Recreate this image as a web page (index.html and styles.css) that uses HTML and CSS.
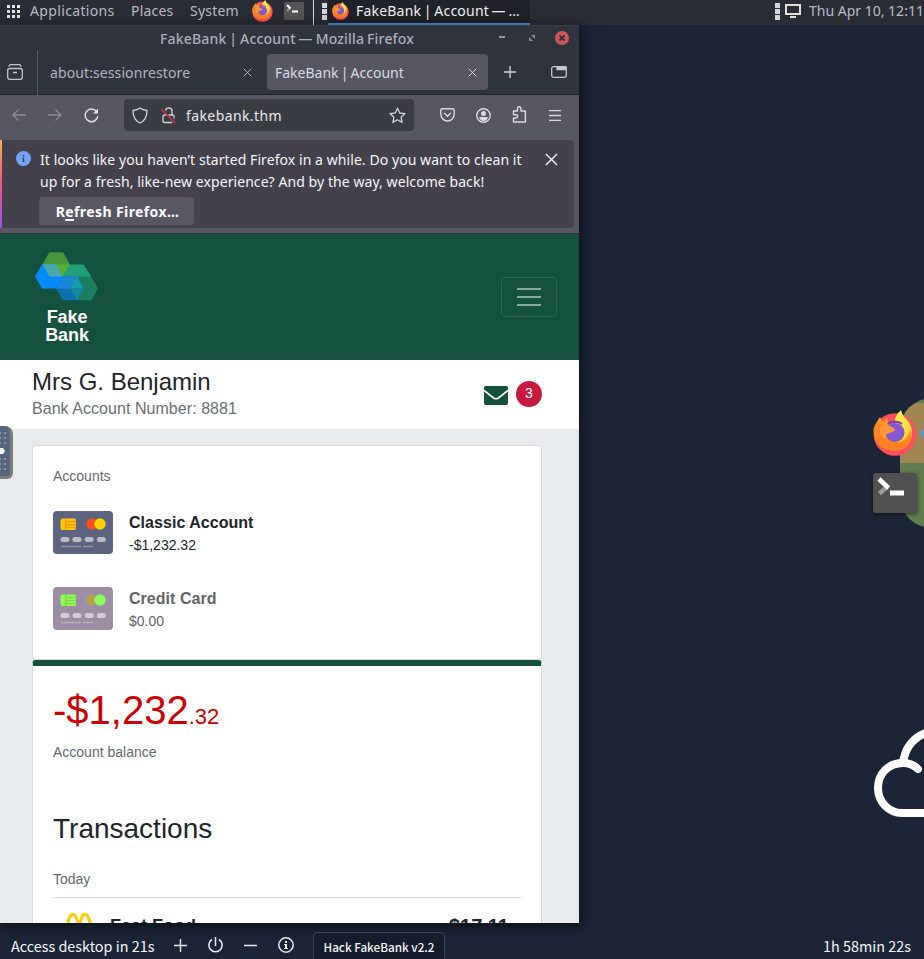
FILE: index.html
```html
<!DOCTYPE html>
<html lang="en">
<head>
<meta charset="utf-8">
<title>Desktop</title>
<link rel="stylesheet" href="styles.css">
</head>
<body>
<svg width="0" height="0" class="defs">
  <defs>
    <linearGradient id="fxo" x1="0.8" y1="0" x2="0.3" y2="1"><stop offset="0" stop-color="#ffbd35"/><stop offset=".45" stop-color="#ff8a1c"/><stop offset="1" stop-color="#ff7a22"/></linearGradient>
    <linearGradient id="fxy" x1="0" y1="0" x2="0" y2="1"><stop offset="0" stop-color="#fff04d"/><stop offset="1" stop-color="#ffc62f"/></linearGradient>
    <symbol id="fox" viewBox="0 0 44 46">
      <circle cx="22" cy="24.500" r="21.300" fill="#ff4f5e"/>
      <path d="M28 0c1 5 4 8 7 11 5 6 5 15 1 22-5 6-12 6-16 2l2-26c1-4 3-6 6-9z" fill="url(#fxy)"/>
      <path d="M.5 21C.5 16 4 12 7 7c1 2 2 4 3 5l4-5 1 6c4 0 8 1 10 3l-4 7-2 6c5 7 16 2 18-10 5 12-3 22-16 22S.5 32 .5 21z" fill="url(#fxo)"/>
      <circle cx="22" cy="22.500" r="9.500" fill="#8359cf"/>
      <path d="M7 17c6-3 11-1 15 2 0 3-3 3-6 4-3 1-4 4-3 7-5-3-7-8-6-13z" fill="#ff9640"/>
      <path d="M15 14c4-3 10-3 14 0" fill="none" stroke="#703db5" stroke-width="2"/>
    </symbol>
    <symbol id="term" viewBox="0 0 44 40">
      <rect width="44" height="40" rx="3" fill="#505050"/>
      <path d="M6.500 20.500l8-7" stroke="#999" stroke-width="4.500"/>
      <path d="M6 6l9.500 9" stroke="#fff" stroke-width="4.500"/>
      <path d="M17 20h14" stroke="#fff" stroke-width="5"/>
    </symbol>
    <symbol id="x" viewBox="0 0 14 14"><path d="M1 1l12 12M13 1L1 13" fill="none" stroke="currentColor" stroke-width="1.500"/></symbol>
  </defs>
</svg>
<div class="desktop">
  <header class="panel ui">
    <svg class="grid-icon" width="13" height="13" fill="#e4e5e8"><path d="M0 0h3v3H0zM5 0h3v3H5zM10 0h3v3h-3zM0 5h3v3H0zM5 5h3v3H5zM10 5h3v3h-3zM0 10h3v3H0zM5 10h3v3H5zM10 10h3v3h-3z"/></svg>
    <span class="menu m1">Applications</span><span class="menu m2">Places</span><span class="menu m3">System</span>
    <svg class="launch-fox" width="21" height="22"><use href="#fox"/></svg>
    <svg class="launch-term" width="20" height="18" viewBox="0 0 20 18"><rect width="20" height="18" rx="1" fill="#555"/><path d="M3 9l3-3" stroke="#999" stroke-width="1.800"/><path d="M3 3l3.500 3.500M8 9.500h6" stroke="#fff" stroke-width="2"/></svg>
    <i class="sep"></i>
    <svg class="grip" width="5" height="17" fill="#d5d6d9"><path d="M0 0h5v5H0zM0 6h5v5H0zM0 12h5v5H0z"/></svg>
    <div class="task"><svg width="17" height="18"><use href="#fox"/></svg><span>FakeBank | Account — …</span></div>
    <svg class="grip grip-right" width="5" height="17" fill="#d5d6d9"><path d="M0 0h5v5H0zM0 6h5v5H0zM0 12h5v5H0z"/></svg>
    <svg class="monitor" width="16" height="14"><path d="M1 1h14v9H1z" fill="none" stroke="#e0e0dc" stroke-width="2"/><path d="M5 12h6v2H5z" fill="#e0e0dc"/></svg>
    <span class="clock">Thu Apr 10, 12:11</span>
  </header>

  <main class="window">
    <div class="titlebar ui">
      <span class="win-title">FakeBank | Account — Mozilla Firefox</span>
      <svg width="70" height="16" viewBox="0 0 70 16"><path d="M0 7h6" stroke="#9196a3" stroke-width="2"/><path d="M32 5h4v4zM30 7v4h4z" fill="#858a96"/><circle cx="63" cy="8" r="7" fill="#d2555b"/><path d="M60.500 5.500l5 5M65.500 5.500l-5 5" stroke="#30343f" stroke-width="1.800"/></svg>
    </div>
    <div class="tabs ui">
      <div class="recent"><svg width="16" height="16" fill="none" stroke="#c4c7d1" stroke-width="1.300"><rect x=".7" y="4.500" width="14.600" height="10.800" rx="2"/><path d="M2 2.700C2 1.500 3 .700 4 .7h8c1 0 2 .8 2 2M6 8.500h4"/></svg></div>
      <div class="tab"><span class="t1">about:sessionrestore</span><svg width="9" height="9"><use href="#x"/></svg></div>
      <div class="tab active"><span class="t2">FakeBank | Account</span><svg width="9" height="9"><use href="#x"/></svg></div>
      <svg class="plus" width="12" height="12" stroke="#d0d3dc" stroke-width="1.300"><path d="M0 6h12M6 0v12"/></svg>
      <svg class="tablist" width="16" height="12" fill="none" stroke="#c4c7d1" stroke-width="1.300"><rect x=".7" y=".7" width="14.600" height="10.600" rx="2"/><path d="M6 1v2.500h9V1z" fill="#c4c7d1"/></svg>
    </div>
    <div class="nav ui">
      <svg class="back" width="14" height="12" fill="none" stroke="#8b8c97" stroke-width="1.300"><path d="M14 6H1M6.500.5L1 6l5.500 5.500"/></svg>
      <svg class="fwd" width="14" height="12" fill="none" stroke="#8b8c97" stroke-width="1.300"><path d="M0 6h13M7.500.5L13 6l-5.500 5.500"/></svg>
      <svg class="reload" width="15" height="15" fill="none" stroke="#e0e1e6" stroke-width="1.500"><path d="M12.500 3.500A6.300 6.300 0 1 0 13.800 8"/><path d="M14 .5v5H9z" fill="#e0e1e6" stroke="none"/></svg>
      <div class="url">
        <svg width="16" height="17" fill="none" stroke="#d0d2d9" stroke-width="1.300"><path d="M8 1C6 2.500 3.500 3.200 1 3.500 1 9 2.500 13.500 8 16c5.500-2.500 7-7 7-12.500C12.500 3.200 10 2.500 8 1z"/></svg>
        <svg class="lock" width="15" height="17" fill="none" stroke="#d0d2d9" stroke-width="1.300"><path d="M4.500 3.500a3.300 3.300 0 0 1 6.500 1V8M7.500 8h4c1 0 1.500.5 1.500 1.500v2M11 15.500H3.500c-1 0-1.500-.5-1.500-1.500V9.500C2 8.500 2.500 8 3.500 8h1V6"/><path d="M0 2l14 14" stroke="#e22850" stroke-width="1.500"/></svg>
        <span>fakebank.thm</span>
        <svg class="star" width="17" height="17" fill="none" stroke="#d0d2d9" stroke-width="1.300" stroke-linejoin="round"><path d="M8.500 1.200l2.200 4.800 5.300.6-3.900 3.600 1 5.200-4.600-2.600-4.600 2.600 1-5.200L1 6.600 6.300 6z"/></svg>
      </div>
      <svg class="pocket" width="15" height="14" fill="none" stroke="#d8dae0" stroke-width="1.400"><path d="M2.500.8h10c1 0 1.700.7 1.700 1.700V6c0 4-3 7-6.700 7S.8 10 .8 6V2.500C.8 1.500 1.500.8 2.500.800zM4.200 5l3.300 3.200L10.800 5"/></svg>
      <svg class="acct" width="15" height="15"><circle cx="7.500" cy="7.500" r="6.700" fill="none" stroke="#d8dae0" stroke-width="1.400"/><circle cx="7.500" cy="5.600" r="2.500" fill="#d8dae0"/><path d="M3 9h9c-.5 2.500-2 4-4.500 4S3.500 11.500 3 9z" fill="#d8dae0"/></svg>
      <svg class="ext" width="15" height="17" fill="none" stroke="#d8dae0" stroke-width="1.400" stroke-linejoin="round"><path d="M1.500 5h4V2.500a1.700 1.700 0 0 1 3.400 0V5h4.500v11H1.500v-4H4a1.600 1.600 0 0 0 0-3.300H1.500z"/></svg>
      <svg class="burger" width="12" height="11" stroke="#d8dae0" stroke-width="1.300"><path d="M0 .7h12M0 5.500h12M0 10.300h12"/></svg>
    </div>
    <div class="notice-wrap ui">
      <div class="notice">
        <svg class="info" width="15" height="15"><circle cx="7.500" cy="7.500" r="7.500" fill="#72a6f5"/><path d="M6.700 6.500h1.500V11H6.700zM6.700 4h1.500v1.500H6.700z" fill="#34446a"/></svg>
        <div class="notice-body">
          <div class="l1">It looks like you haven’t started Firefox in a while. Do you want to clean it</div>
          <div class="l2">up for a fresh, like-new experience? And by the way, welcome back!</div>
          <button class="ui">R<u>e</u>fresh Firefox…</button>
        </div>
        <svg class="close" width="13" height="13"><use href="#x"/></svg>
      </div>
    </div>
    <section class="page">
      <div class="brandbar">
        <div class="brand">
          <svg width="63" height="49" viewBox="106 66 190 146">
            <path d="M149 66h42l20 37-22 36h-40l-20-37z" fill="#46973a"/>
            <path d="M127 102h43l20 37-20 36h-43l-21-36z" fill="#008cff"/>
            <path d="M211 103h42l22 36-21 36h-43l-22-36z" fill="#1fa078"/>
            <path d="M235 139h40l21 36-20 36h-43l-20-36z" fill="#1b8062"/>
            <path d="M190 139h43l20 36-20 36h-43l-21-36z" fill="#0a70ae"/>
            <path d="M129 102h41l20 37h-41z" fill="#4aa8a8"/>
            <path d="M170 102h41l-21 37z" fill="#55b030"/>
            <path d="M190 139h43l-20 36h-43z" fill="#168bd0"/>
            <path d="M190 139l22 36h-42z" fill="#1a83dc"/>
            <path d="M233 139l20 36h-40z" fill="#179aa6"/>
            <path d="M213 175h40l-20 36z" fill="#188aa0"/>
          </svg>
          <b>Fake<br>Bank</b>
        </div>
        <div class="toggler"><i></i><i></i><i></i></div>
      </div>
      <div class="customer">
        <div><div class="name">Mrs G. Benjamin</div><div class="number">Bank Account Number: 8881</div></div>
        <svg class="mail" width="24" height="19" viewBox="0 0 25 19" preserveAspectRatio="none"><rect width="25" height="19" rx="2" fill="#14523f"/><path d="M0 4.500l10 7.500q2.500 1.500 5 0L25 4.500" fill="none" stroke="#fff" stroke-width="1.700"/></svg>
        <span class="count">3</span>
      </div>
      <div class="content">
        <div class="card accounts">
          <div class="label">Accounts</div>
          <div class="account">
            <svg width="60" height="43" viewBox="0 0 60 43"><rect width="60" height="43" rx="4" fill="#5d6481"/><rect x="7.500" y="7.500" width="15.500" height="11.500" rx="2" fill="#fc0"/><path d="M12.500 7.500V19M13 10.500h10M13 13.500h10M13 16.500h10" stroke="#ff9811" stroke-width="1.300"/><circle cx="39" cy="13" r="5.700" fill="#ff4f19"/><circle cx="47" cy="13" r="5.700" fill="#ffd000"/><g fill="#bbbcc2"><rect x="7.500" y="26" width="9" height="5" rx="2.500"/><rect x="19.500" y="26" width="9" height="5" rx="2.500"/><rect x="31.700" y="26" width="9" height="5" rx="2.500"/><rect x="43.800" y="26" width="9" height="5" rx="2.500"/></g><path d="M8 35.500h20M30 35.500h10" stroke="#8f93a5" stroke-width="1.500"/></svg>
            <div><b>Classic Account</b><span>-$1,232.32</span></div>
          </div>
          <div class="account muted">
            <svg width="60" height="43" viewBox="0 0 60 43"><rect width="60" height="43" rx="4" fill="#9c8da4"/><rect x="7.500" y="7.500" width="15.500" height="11.500" rx="2" fill="#8cff55"/><path d="M12.500 7.500V19M13 10.500h10M13 13.500h10M13 16.500h10" stroke="#83d94d" stroke-width="1.300"/><circle cx="39" cy="13" r="5.700" fill="#b5a04b"/><circle cx="47" cy="13" r="5.700" fill="#8cff5a"/><g fill="#d2cdd4"><rect x="7.500" y="26" width="9" height="5" rx="2.500"/><rect x="19.500" y="26" width="9" height="5" rx="2.500"/><rect x="31.700" y="26" width="9" height="5" rx="2.500"/><rect x="43.800" y="26" width="9" height="5" rx="2.500"/></g><path d="M8 35.500h20M30 35.500h10" stroke="#b9aebf" stroke-width="1.500"/></svg>
            <div><b>Credit Card</b><span>$0.00</span></div>
          </div>
        </div>
        <div class="card detail">
          <div class="balance">-$1,232<small>.32</small></div>
          <div class="label">Account balance</div>
          <h2>Transactions</h2>
          <div class="label day">Today</div>
          <div class="row">
            <svg width="28" height="28" fill="none" stroke="#fc0" stroke-width="3"><path d="M1.500 28C1.500-7 14-7 14 24 14-7 26.500-7 26.500 28"/></svg>
            <b>Fast Food</b><b class="amount">$17.11</b>
          </div>
        </div>
      </div>
    </section>
  </main>

  <svg class="wallpaper" width="64" height="440" viewBox="860 390 64 440">
    <defs><clipPath id="pill"><rect x="900" y="398" width="80" height="130" rx="32"/></clipPath></defs>
    <g clip-path="url(#pill)"><path d="M900 398h24v130h-24z" fill="#5f7d4e"/><path d="M900 403h24v60h-24z" fill="#a28555"/></g>
    <circle cx="925" cy="433" r="4" fill="#4f9ce4"/>
    <path d="M918 769c-5-5-10-6-15-6-15 0-25 11-25 25s11 25 24 25h24M903 763c2-16 11-26 25-31" fill="none" stroke="#fff" stroke-width="8" stroke-linecap="round"/>
  </svg>
  <svg class="dock-fox" width="44" height="46"><use href="#fox"/></svg>
  <svg class="dock-term" width="44" height="40"><use href="#term"/></svg>
  <div class="handle"><svg width="10" height="51"><g fill="#8997ae"><path d="M0 6h1v2H0zM4 6h2v2H4zM0 11h1v2H0zM4 11h2v2H4zM0 16h1v2H0zM4 16h2v2H4zM0 32h1v2H0zM4 32h2v2H4zM0 37h1v2H0zM4 37h2v2H4zM0 42h1v2H0zM4 42h2v2H4z"/></g><path d="M0 22h3l2 3-2 3H0z" fill="#fff"/></svg></div>

  <footer class="bottom">
    <span class="access">Access desktop in 21s</span>
    <svg class="b-plus" width="13" height="13" stroke="#e8eaed" stroke-width="1.400"><path d="M0 6.500h13M6.500 0v13"/></svg>
    <svg class="b-power" width="15" height="16" fill="none" stroke="#e8eaed" stroke-width="1.500"><path d="M4 2.500a6.600 6.600 0 1 0 7 0M7.500 0v9"/></svg>
    <svg class="b-minus" width="13" height="3" stroke="#e8eaed" stroke-width="1.500"><path d="M0 1.500h13"/></svg>
    <svg class="b-info" width="16" height="16"><circle cx="8" cy="8" r="7.200" fill="none" stroke="#e8eaed" stroke-width="1.500"/><path d="M7 4h2v2H7zM6 7h3v4h1v1H6v-1h1V8H6z" fill="#e8eaed"/></svg>
    <span class="version">Hack FakeBank v2.2</span>
    <span class="timer">1h 58min 22s</span>
  </footer>
</div>
</body>
</html>
```
FILE: styles.css
```css
* { box-sizing: border-box; }
body { margin: 0; background: #1c2538; }
svg { display: block; flex: none; }
.defs { position: absolute; }
.desktop { width: 924px; height: 959px; overflow: hidden; position: relative; display: flex; flex-direction: column; }
.ui { font-family: "Noto Sans", sans-serif; font-size: 14px; }
.ui span { white-space: nowrap; flex: none; }

.panel { height: 25px; flex: none; display: flex; align-items: center; background: #2b2d36; color: #b9bcc6; line-height: 22px; padding: 0 0 3px 7px; }
.m1 { width: 84px; margin-left: 10px; letter-spacing: .35px; }
.m2 { width: 42px; margin-left: 17px; letter-spacing: .2px; }
.m3 { width: 48px; margin-left: 17px; letter-spacing: .2px; }
.launch-fox { margin-left: 14px; }
.launch-term { margin-left: 11px; }
.sep { width: 1px; height: 25px; background: #dcdde0; margin: 3px 8px 0 9px; }
.task { display: flex; align-items: center; height: 25px; width: 202px; margin: 3px 0 0 1px; padding: 0 0 1px 4px; border-bottom: 2px solid #4a90e2; background: #202229; color: #f0f0f2; }
.task span { margin-left: 7px; letter-spacing: .2px; word-spacing: -1.200px; }
.grip-right { margin-left: auto; }
.monitor { margin-left: 5px; }
.clock { width: 115px; margin-left: 8px; }

.window { width: 579px; height: 898px; flex: none; display: flex; flex-direction: column; background: #565762; box-shadow: 2px 3px 12px 2px rgba(0,0,0,.5); overflow: hidden; }
.titlebar { height: 25px; flex: none; display: flex; align-items: center; padding-left: 160px; background: #30343f; color: #abb0bd; font-weight: 500; border-top: 1px solid #3a3e49; }
.win-title { width: 254px; margin-top: 1px; letter-spacing: .17px; word-spacing: -.900px; }
.titlebar svg { margin: 0 0 0 85px; }
.tabs { height: 45px; flex: none; display: flex; align-items: center; background: #30343f; border-bottom: 1px solid #24262e; color: #b0b4c0; }
.recent { width: 38px; height: 45px; border-right: 1px solid #565a67; padding: 14px 0 0 7px; }
.tab { width: 229px; height: 36px; display: flex; align-items: center; justify-content: space-between; padding: 0 15px 0 12px; color: #b0b4c0; }
.tab.active { width: 221px; padding: 0 11px 0 8px; background: #565762; color: #d8dae2; border-radius: 4px; }
.t1 { letter-spacing: .1px; }
.t2 { word-spacing: -1.500px; }
.plus { margin-left: 16px; }
.tablist { margin-left: 35px; }
.nav { height: 40px; flex: none; display: flex; align-items: center; padding-left: 12px; background: #565762; }
.fwd { margin-left: 22px; }
.reload { margin: 0 25px 0 22px; }
.url { width: 290px; height: 32px; background: #3a3c43; border-radius: 4px; color: #e8e8ec; display: flex; align-items: center; padding: 0 8px; }
.url span { letter-spacing: .4px; }
.lock { margin: 0 10px 0 13px; }
.star { margin: 0 0 0 auto; }
.pocket { margin-left: 26px; }
.acct { margin-left: 21px; }
.ext { margin: -2px 0 0 21px; }
.burger { margin-left: 22px; }
.notice-wrap { height: 99px; flex: none; padding: 5px 5px 5px 0; border-bottom: 1px solid #26343a; background: #565762; }
.notice { height: 88px; display: flex; background: #44414d; border-radius: 0 4px 4px 0; border-left: 2px solid; border-image: linear-gradient(#ffb34b, #ff4f85 50%, #8e51ff) 1; color: #f5f5f8; padding: 9px 0 0 14px; }
.info { margin-top: 2px; }
.notice-body { width: 500px; margin-left: 9px; white-space: nowrap; line-height: 22px; letter-spacing: .07px; }
.notice button { display: block; width: 155px; height: 28px; margin: 4px 0 0 -1px; padding: 0 0 0 2px; border: 0; border-radius: 4px; background: #5a5764; color: #fff; font-weight: 700; letter-spacing: .4px; }
.notice button u { text-underline-offset: 2px; text-decoration-thickness: 2px; text-decoration-skip-ink: none; }
.close { margin: 4px 0 0 5px; }

.page { height: 689px; flex: none; overflow: hidden; background: #e7ebee; font-family: "Liberation Sans", Arial, sans-serif; color: #212529; }
.brandbar { height: 126px; display: flex; justify-content: space-between; background: #14523f; padding: 18px 22px 0 35px; }
.brand { width: 64px; color: #fff; text-align: center; font-size: 18px; line-height: 18px; }
.brand svg { margin-left: .400px; }
.brand b { display: block; margin-top: 7px; letter-spacing: -.1px; }
.toggler { width: 56px; height: 40px; margin-top: 25px; border: 1px solid #2c6352; border-radius: 4px; display: flex; flex-direction: column; align-items: center; gap: 6px; padding-top: 10px; }
.toggler i { width: 24px; height: 2px; background: #89a89f; flex: none; }
.customer { height: 69px; display: flex; background: #fff; padding: 7px 37px 0 32px; }
.name { font-size: 24px; line-height: 30px; }
.number { font-size: 16px; line-height: 24px; color: #6b7075; letter-spacing: .05px; }
.mail { margin: 19px 0 0 auto; }
.count { width: 26px; height: 26px; margin: 14px 0 0 8px; border-radius: 50%; background: #c9193f; color: #fff; text-align: center; font-size: 14px; line-height: 25px; }
.content { padding: 16px 37px 0 32px; }
.card { background: #fff; border: 1px solid #d9dcdf; border-radius: 4px; padding: 0 20px; }
.accounts { height: 215px; padding-top: 20px; }
.label { font-size: 14px; line-height: 21px; color: #666a6e; }
.account { display: flex; height: 43px; margin-top: 25px; }
.account svg { margin-top: -.600px; }
.account + .account { margin-top: 33px; }
.account div { margin-left: 16px; display: flex; flex-direction: column; }
.account b { font-size: 16px; line-height: 22px; letter-spacing: .04px; }
.account span { font-size: 14px; line-height: 23px; }
.muted { color: #626568; }
.detail { border-top: 6px solid #14523f; height: 300px; padding-top: 14px; }
.balance { font-size: 40px; line-height: 60px; height: 62px; color: #c00; white-space: nowrap; }
.balance small { font-size: 22px; }
h2 { margin: 49px 0 0; font-size: 28px; line-height: 34px; font-weight: 400; }
.day { margin-top: 23px; height: 29px; border-bottom: 1px solid #dcdedf; }
.row { display: flex; padding: 15px 12px 0; font-size: 18px; line-height: 24px; }
.row b { margin: 1px 0 0 17px; }
.row .amount { margin: 1px 0 0 auto; font-size: 20px; }

.bottom { height: 36px; flex: none; display: flex; align-items: center; padding: 9px 13px 0 11px; color: #f4f5f7; font-family: "Noto Sans CJK SC", sans-serif; font-size: 14.400px; }
.bottom span { white-space: nowrap; flex: none; }
.bottom svg { margin-top: -1px; }
.access { width: 144px; }
.b-plus { margin-left: 19px; }
.b-power { margin-left: 21px; }
.b-minus { margin-left: 21px; }
.b-info { margin-left: 21px; }
.version { width: 132px; height: 32px; margin: 5px 0 0 19px; border: 1px solid #3b4356; border-radius: 4px; background: #151c2b; font-size: 11.700px; line-height: 27px; text-align: center; font-weight: 500; }
.timer { margin-left: auto; }

.wallpaper { position: absolute; left: 860px; top: 390px; }
.dock-fox { position: absolute; left: 873px; top: 410px; }
.dock-term { position: absolute; left: 873px; top: 473px; filter: drop-shadow(0 1px 2px #0008); }
.handle { position: absolute; left: 0; top: 426px; width: 13px; height: 53px; background: #566580; border: solid #7d7d7d; border-width: 0 3px 3px 0; border-radius: 0 8px 6px 0; }
```
